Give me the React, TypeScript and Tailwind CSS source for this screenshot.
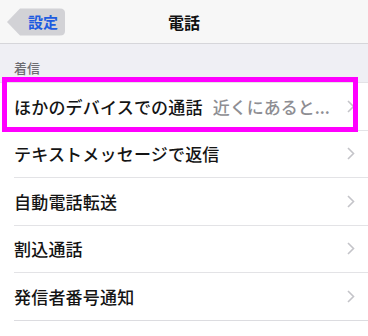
import { ReactNode } from 'react';

const font = { fontFamily: '"Noto Sans CJK JP", "Noto Sans", sans-serif' };

function Chevron() {
  return (
    <svg width="8" height="13" viewBox="0 0 8 13" className="shrink-0">
      <path d="M1 1l5.5 5.5L1 12" fill="none" stroke="#c4c4c9" strokeWidth="1.6" />
    </svg>
  );
}

function Row({ label, value, last }: { label: string; value?: ReactNode; last?: boolean }) {
  return (
    <div className="pl-[14px] bg-white">
      <div
        className={
          'h-[47.5px] flex items-center pr-[13px] ' +
          (last ? 'border-b border-[#dcdce0]' : 'border-b border-[#e3e3e6]')
        }
      >
        <span className="text-[17px] font-medium text-[#141414] shrink-0 tracking-[0.2px]">{label}</span>
        {value && (
          <span className="ml-[10px] text-[17px] text-[#8e8e93] font-medium truncate">{value}</span>
        )}
        <span className="ml-auto pl-[12px] flex items-center">
          <Chevron />
        </span>
      </div>
    </div>
  );
}

export default function App() {
  return (
    <div className="relative w-[368px] h-[336px] overflow-hidden bg-white" style={font}>
      {/* ナビゲーションバー */}
      <div className="relative h-[44px] bg-[#f7f7f7] border-b border-[#d6d6da] flex items-center justify-center">
        <div className="absolute left-[7px] top-[8px] w-[58px] h-[28px]">
          <svg width="58" height="28" viewBox="0 0 58 28" className="absolute inset-0">
            <path
              d="M0 14 L13 0.5 H53 Q58 0.5 58 5 V23 Q58 27.5 53 27.5 H13 Z"
              fill="#d2d2d6"
            />
          </svg>
          <span className="absolute left-[21px] top-[3px] text-[15px] font-bold text-[#1f5ce0] leading-[22px]">
            設定
          </span>
        </div>
        <span className="text-[16px] font-bold text-[#111] leading-none">電話</span>
      </div>

      {/* セクションヘッダー */}
      <div className="h-[39px] bg-[#efeff4] flex items-end pl-[14px] pb-[8px] border-b border-[#e3e3e6]">
        <span className="text-[13px] font-medium text-[#6d6d72] leading-none">着信</span>
      </div>

      <Row label="ほかのデバイスでの通話" value="近くにあると..." />
      <Row label="テキストメッセージで返信" />
      <Row label="自動電話転送" />
      <Row label="割込通話" />
      <Row label="発信者番号通知" last />

      {/* 注目枠 */}
      <div className="absolute left-[2px] top-[77px] w-[356px] h-[55px] border-[5px] border-[#ff00ff] pointer-events-none" />
    </div>
  );
}
